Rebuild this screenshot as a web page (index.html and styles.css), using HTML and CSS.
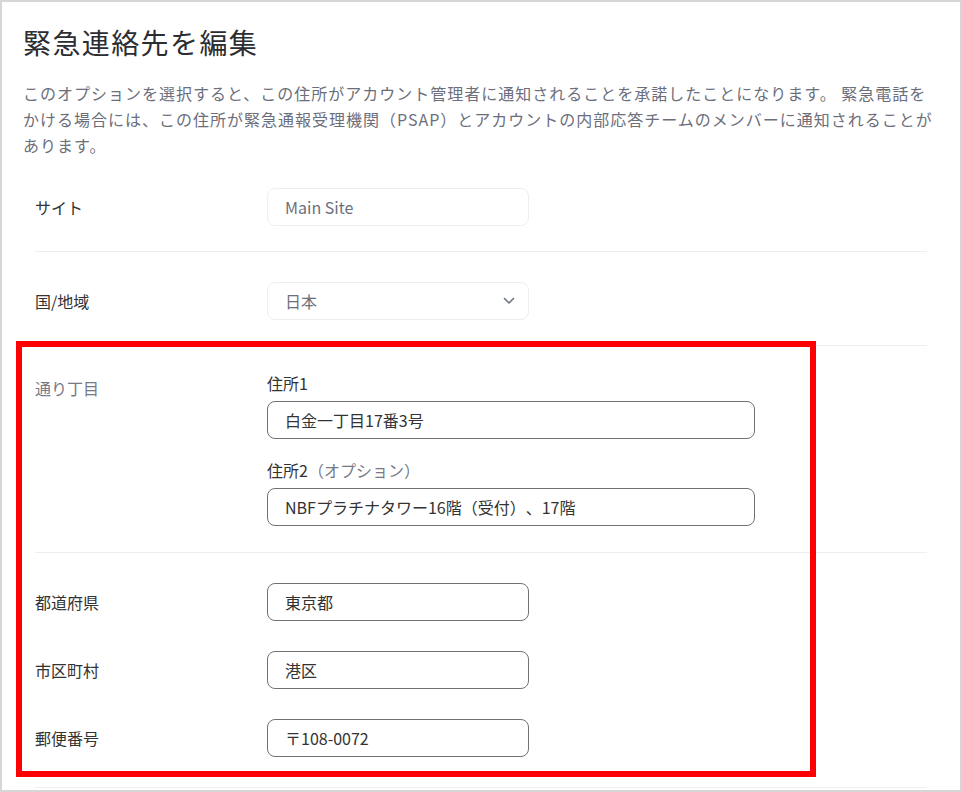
FILE: index.html
```html
<!DOCTYPE html>
<html lang="ja">
<head>
<meta charset="utf-8">
<title>緊急連絡先を編集</title>
<link rel="stylesheet" href="styles.css">
</head>
<body>
<div class="card">
  <h1 class="title">緊急連絡先を編集</h1>
  <p class="desc">このオプションを選択すると、この住所がアカウント管理者に通知されることを承諾したことになります。 緊急電話をかける場合には、この住所が緊急通報受理機関（PSAP）とアカウントの内部応答チームのメンバーに通知されることがあります。</p>
  <div class="form">
    <div class="row row-center">
      <div class="label">サイト</div>
      <div class="input input-soft">Main Site</div>
    </div>
    <div class="row row-center">
      <div class="label">国/地域</div>
      <div class="input input-soft select">
        <span>日本</span>
        <svg class="chevron" width="12" height="8" viewBox="0 0 12 8"><path d="M1.5 1.5l4.5 4.5 4.5-4.5" fill="none" stroke="#6b7280" stroke-width="1.6" stroke-linecap="round" stroke-linejoin="round"/></svg>
      </div>
    </div>
    <div class="row row-top address">
      <div class="label label-muted label-offset">通り丁目</div>
      <div class="stack">
        <div class="field">
          <div class="sublabel">住所1</div>
          <div class="input input-wide input-strong">白金一丁目17番3号</div>
        </div>
        <div class="field">
          <div class="sublabel">住所2<span class="optional">（オプション）</span></div>
          <div class="input input-wide input-strong">NBFプラチナタワー16階（受付）、17階</div>
        </div>
      </div>
    </div>
    <div class="row group">
      <div class="line">
        <div class="label">都道府県</div>
        <div class="input input-strong">東京都</div>
      </div>
      <div class="line">
        <div class="label">市区町村</div>
        <div class="input input-strong">港区</div>
      </div>
      <div class="line">
        <div class="label">郵便番号</div>
        <div class="input input-strong">〒108-0072</div>
      </div>
    </div>
  </div>
  <div class="highlight"></div>
</div>
</body>
</html>
```

FILE: styles.css
```css
* { box-sizing: border-box; }
html, body { margin: 0; padding: 0; background: #fff; }
body {
  font-family: "Noto Sans CJK JP", "Noto Sans", sans-serif;
  color: #333;
  text-spacing-trim: space-all;
}
.card {
  position: relative;
  width: 962px;
  height: 792px;
  border: 2px solid #d6d6d6;
  padding: 20px 21px 0 21px;
  overflow: hidden;
  background: #fff;
}
.title {
  margin: 0;
  font-size: 28px;
  line-height: 40px;
  font-weight: 400;
  letter-spacing: 0.05em;
  color: #2c2d31;
}
.desc {
  width: 915px;
  margin: 18px 0 0 0;
  font-size: 16px;
  line-height: 26px;
  letter-spacing: 1px;
  color: #6c6f7b;
}
.form {
  margin: 0 12px;
}
.row {
  display: grid;
  grid-template-columns: 232px 1fr;
  padding: 30px 0 25px 0;
  border-bottom: 1px solid #eceef3;
}
.row-center { align-items: center; }
.row-top { align-items: start; }
.address { padding: 27px 0 26px 0; }
.label {
  font-size: 16px;
  line-height: 20px;
  color: #333;
}
.label-muted { color: #777a86; }
.label-offset { margin-top: 5px; }
.input {
  width: 262px;
  height: 38px;
  border-radius: 8px;
  padding: 0 17px;
  display: flex;
  align-items: center;
  font-size: 16px;
  color: #333;
}
.input-soft {
  border: 1px solid #eceef2;
  color: #6b6f7a;
}
.input-strong {
  border: 1px solid #6f7378;
}
.input-wide { width: 488px; }
.select { justify-content: space-between; padding-right: 13px; }
.chevron { display: block; }
.stack {
  display: flex;
  flex-direction: column;
  gap: 21px;
}
.sublabel {
  font-size: 16px;
  line-height: 20px;
  margin-bottom: 8px;
  color: #333;
}
.optional { color: #777a86; }
.group {
  display: flex;
  flex-direction: column;
  gap: 30px;
  padding-bottom: 30px;
}
.line {
  display: grid;
  grid-template-columns: 232px 1fr;
  align-items: center;
}
.highlight {
  position: absolute;
  left: 14px;
  top: 339px;
  width: 800px;
  height: 436px;
  border: 6px solid #ff0000;
  pointer-events: none;
}
```
